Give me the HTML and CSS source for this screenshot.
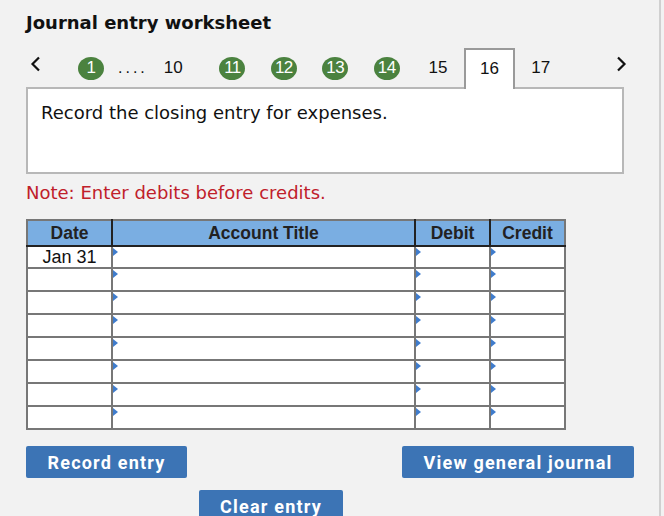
FILE: index.html
```html
<!DOCTYPE html>
<html>
<head>
<meta charset="utf-8">
<link rel="stylesheet" href="styles.css">
</head>
<body>
<div class="page">
  <h1 class="title">Journal entry worksheet</h1>
  <div class="nav">
    <span class="arrow prev"><svg width="11" height="16" viewBox="0 0 11 16"><path d="M9 1.5 L2.5 8 L9 14.5" fill="none" stroke="#111" stroke-width="2.2"/></svg></span>
    <span class="circle first">1</span>
    <span class="dots">....</span>
    <span class="num ten">10</span>
    <span class="slot"><span class="circle">11</span></span>
    <span class="slot"><span class="circle">12</span></span>
    <span class="slot"><span class="circle">13</span></span>
    <span class="slot"><span class="circle">14</span></span>
    <span class="slot"><span class="num">15</span></span>
    <span class="slot tab"><span class="num">16</span></span>
    <span class="slot"><span class="num">17</span></span>
    <span class="arrow next"><svg width="11" height="16" viewBox="0 0 11 16"><path d="M2 1.5 L8.5 8 L2 14.5" fill="none" stroke="#111" stroke-width="2.2"/></svg></span>
  </div>
  <div class="prompt">Record the closing entry for expenses.</div>
  <p class="note">Note: Enter debits before credits.</p>
  <table class="journal">
    <thead>
      <tr><th class="c-date">Date</th><th class="c-acct">Account Title</th><th class="c-deb">Debit</th><th class="c-cred">Credit</th></tr>
    </thead>
    <tbody>
      <tr class="first-row"><td class="date">Jan 31</td><td class="mark"></td><td class="mark"></td><td class="mark"></td></tr>
      <tr><td class="date"></td><td class="mark"></td><td class="mark"></td><td class="mark"></td></tr>
      <tr><td class="date"></td><td class="mark"></td><td class="mark"></td><td class="mark"></td></tr>
      <tr><td class="date"></td><td class="mark"></td><td class="mark"></td><td class="mark"></td></tr>
      <tr><td class="date"></td><td class="mark"></td><td class="mark"></td><td class="mark"></td></tr>
      <tr><td class="date"></td><td class="mark"></td><td class="mark"></td><td class="mark"></td></tr>
      <tr><td class="date"></td><td class="mark"></td><td class="mark"></td><td class="mark"></td></tr>
      <tr><td class="date"></td><td class="mark"></td><td class="mark"></td><td class="mark"></td></tr>
    </tbody>
  </table>
  <div class="actions">
    <button class="btn record">Record entry</button>
    <button class="btn view">View general journal</button>
  </div>
  <div class="actions2">
    <button class="btn clear">Clear entry</button>
  </div>
</div>
</body>
</html>
```
FILE: styles.css
```css
html, body {
  margin: 0;
  padding: 0;
  background: #f2f2f2;
}
.page {
  width: 661px;
  height: 516px;
  box-sizing: border-box;
  border-right: 2px solid #d0d0d0;
  padding: 13px 0 0 26px;
  overflow: hidden;
  font-family: "DejaVu Sans", Verdana, sans-serif;
  color: #111;
}
.title {
  margin: 0;
  font-size: 18px;
  line-height: 20px;
  font-weight: bold;
  color: #111;
}
.nav {
  display: flex;
  align-items: center;
  height: 40px;
  margin-top: 15px;
  font-family: "Liberation Sans", Arial, sans-serif;
  font-size: 17px;
  position: relative;
}
.arrow {
  display: flex;
  align-items: center;
  height: 16px;
  margin-top: -9px;
}
.prev {
  width: 52px;
  padding-left: 4px;
  box-sizing: border-box;
}
.circle {
  display: inline-flex;
  align-items: center;
  justify-content: center;
  width: 26px;
  height: 23px;
  border-radius: 50%;
  background: #4b823f;
  color: #fff;
  font-size: 17px;
  letter-spacing: -0.5px;
}
.dots {
  margin-left: 14px;
  letter-spacing: 3px;
  font-size: 16px;
}
.num {
  color: #111;
}
.ten {
  margin-left: 16px;
  width: 43px;
}
.slot {
  width: 51.4px;
  height: 40px;
  display: flex;
  align-items: center;
  justify-content: center;
  box-sizing: border-box;
}
.tab {
  align-self: flex-start;
  background: #fff;
  border: 2px solid #9a9a9a;
  border-bottom: none;
  height: 41px;
  padding-bottom: 1px;
  position: relative;
  z-index: 2;
}
.next {
  margin-left: 49px;
}
.prompt {
  height: 87px;
  box-sizing: border-box;
  width: 598px;
  margin-top: -1px;
  background: #fff;
  border: 2px solid #b8b8b8;
  padding: 13px 0 0 13px;
  font-size: 18px;
  line-height: 22px;
  color: #111;
}
.note {
  margin: 8px 0 0;
  font-size: 18px;
  line-height: 22px;
  color: #c0202a;
}
.journal {
  margin-top: 15px;
  border-collapse: collapse;
  width: 530px;
  table-layout: fixed;
  font-family: "Liberation Sans", Arial, sans-serif;
  font-size: 18px;
  background: #fff;
}
.journal th {
  background: #7aaee2;
  color: #222;
  font-weight: bold;
  height: 24px;
  padding: 0;
  line-height: 20px;
  font-size: 17.5px;
  border: 2px solid #777;
  border-bottom: 2px solid #222;
  border-left-color: #222;
  border-right-color: #222;
}
.journal th:first-child { border-left-color: #777; }
.journal th:last-child { border-right-color: #777; }
.c-date { width: 83px; }
.c-acct { width: 301px; }
.c-deb { width: 73px; }
.c-cred { width: 73px; }
.journal td {
  border: 2px solid #777;
  height: 21px;
  padding: 0;
  line-height: 20px;
  position: relative;
}
.journal .first-row td {
  border-top-color: #222;
  height: 20px;
  vertical-align: top;
}
.date {
  text-align: center;
  color: #111;
}
.mark::before {
  content: "";
  position: absolute;
  left: 0;
  top: 1px;
  border-top: 4px solid transparent;
  border-bottom: 4px solid transparent;
  border-left: 5px solid #3f7ccc;
}
.actions {
  display: flex;
  justify-content: space-between;
  width: 608px;
  margin-top: 16px;
}
.actions2 {
  padding-left: 173px;
  margin-top: 12px;
}
.btn {
  height: 32px;
  border: none;
  border-radius: 2px;
  background: #3c74b5;
  color: #fff;
  font-family: Roboto, "Liberation Sans", sans-serif;
  font-weight: bold;
  font-size: 18px;
  letter-spacing: 1.2px;
  padding: 0;
  margin: 0;
}
.record { width: 161px; }
.view { width: 232px; }
.clear { width: 144px; }
```
